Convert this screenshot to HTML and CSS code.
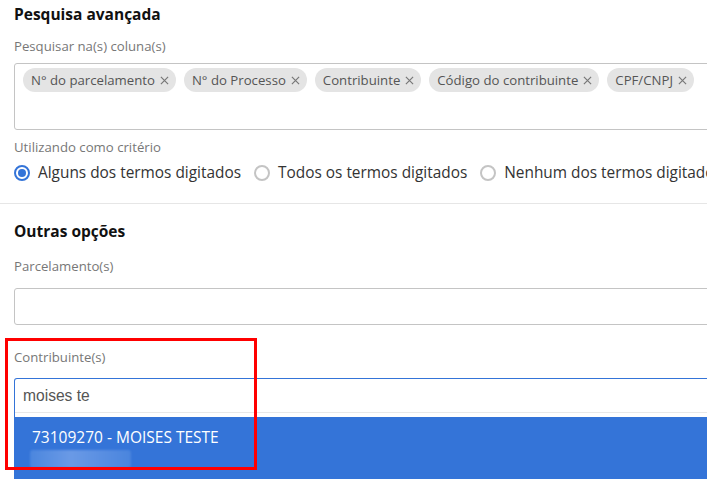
FILE: index.html
```html
<!DOCTYPE html>
<html lang="pt-BR">
<head>
  <meta charset="UTF-8" />
  <meta name="viewport" content="width=device-width, initial-scale=1.0">
  <title>Pesquisa avançada</title>
  <link rel="stylesheet" href="styles.css">
</head>
<body>
  <div class="section">
    <h2>Pesquisa avançada</h2>
    <div class="label first">Pesquisar na(s) coluna(s)</div>
    <div class="tag-box">
      <span class="tag">N° do parcelamento <svg class="x" viewBox="0 0 10 10"><path d="M1 1L9 9M9 1L1 9"/></svg></span>
      <span class="tag">N° do Processo <svg class="x" viewBox="0 0 10 10"><path d="M1 1L9 9M9 1L1 9"/></svg></span>
      <span class="tag">Contribuinte <svg class="x" viewBox="0 0 10 10"><path d="M1 1L9 9M9 1L1 9"/></svg></span>
      <span class="tag">Código do contribuinte <svg class="x" viewBox="0 0 10 10"><path d="M1 1L9 9M9 1L1 9"/></svg></span>
      <span class="tag">CPF/CNPJ <svg class="x" viewBox="0 0 10 10"><path d="M1 1L9 9M9 1L1 9"/></svg></span>
    </div>

    <div class="label criteria">Utilizando como critério</div>
    <div class="radios">
      <label class="radio"><span class="circle checked"></span>Alguns dos termos digitados</label>
      <label class="radio"><span class="circle"></span>Todos os termos digitados</label>
      <label class="radio"><span class="circle"></span>Nenhum dos termos digitados</label>
    </div>
  </div>

  <div class="divider"></div>

  <div class="section">
    <h2 class="other">Outras opções</h2>
    <div class="label">Parcelamento(s)</div>
    <div class="input"></div>

    <div class="label contrib">Contribuinte(s)</div>
    <div class="combo">
      <div class="combo-input">moises te</div>
      <div class="combo-list">
        <div class="option">
          73109270 - MOISES TESTE
          <div class="blur"></div>
        </div>
      </div>
    </div>
  </div>

  <div class="highlight"></div>
</body>
</html>
```

FILE: styles.css
```css
body {
  margin: 0;
  font-family: "Open Sans", sans-serif;
  color: #222;
  background: #fff;
  width: 707px;
  height: 479px;
  overflow: hidden;
  position: relative;
}
.section {
  padding-left: 14px;
  white-space: nowrap;
}
h2 {
  font-size: 15.5px;
  font-weight: bold;
  line-height: 20px;
  margin: 4px 0 0 0;
  color: #111;
}
.label {
  font-size: 13.2px;
  color: #777;
  line-height: 18px;
  margin-top: 16px;
}
.label.first {
  margin-top: 13px;
}
.tag-box {
  margin-top: 8px;
  width: 720px;
  height: 67px;
  border: 1px solid #c4c4c4;
  border-radius: 3px;
  padding: 4px 8px;
  box-sizing: border-box;
  display: flex;
  gap: 8px;
  align-items: flex-start;
}
.tag {
  display: flex;
  align-items: center;
  background: #e4e4e4;
  color: #555;
  font-size: 13.2px;
  height: 24px;
  padding: 0 7px 0 8px;
  border-radius: 12px;
}
.tag .x {
  width: 9px;
  height: 9px;
  margin-left: 5px;
  stroke: #777;
  stroke-width: 1.3;
  fill: none;
}
.criteria {
  margin-top: 8px;
}
.radios {
  display: flex;
  gap: 13px;
  margin-top: 6px;
}
.radio {
  display: flex;
  align-items: center;
  font-size: 15.4px;
  color: #333;
  line-height: 22px;
}
.circle {
  width: 16px;
  height: 16px;
  box-sizing: border-box;
  border: 2px solid #c4c4c4;
  border-radius: 50%;
  margin-right: 8px;
  position: relative;
}
.circle.checked {
  border-color: #3474d8;
}
.circle.checked::after {
  content: "";
  position: absolute;
  left: 2px;
  top: 2px;
  width: 8px;
  height: 8px;
  border-radius: 50%;
  background: #3474d8;
}
.divider {
  margin-top: 19px;
  border-top: 1px solid #e6e6e6;
}
h2.other {
  margin-top: 17px;
}
.input {
  margin-top: 13px;
  width: 720px;
  height: 37px;
  box-sizing: border-box;
  border: 1px solid #c4c4c4;
  border-radius: 3px;
}
.contrib {
  margin-top: 23px;
}
.combo {
  margin-top: 12px;
  width: 720px;
  border: 1px solid #3474d8;
  border-bottom: none;
  border-radius: 3px 3px 0 0;
}
.combo-input {
  height: 33px;
  line-height: 33px;
  padding-left: 8px;
  font-family: "Liberation Sans", Arial, sans-serif;
  font-size: 15.6px;
  color: #555;
  border-bottom: 1px solid #e8e8e8;
}
.combo-list {
  margin-top: 4px;
}
.option {
  background: #3474d8;
  color: #fff;
  font-size: 15.5px;
  line-height: 22px;
  padding: 9px 17px 20px;
  position: relative;
}
.blur {
  width: 101px;
  height: 18px;
  margin-top: 2px;
  margin-left: -2px;
  background: linear-gradient(90deg, #4b86de, #6a9ae6 40%, #5a8fe2 70%, #4a85dd);
  border-radius: 3px;
  filter: blur(1px);
}
.highlight {
  position: absolute;
  left: 5px;
  top: 338px;
  width: 252px;
  height: 132px;
  box-sizing: border-box;
  border: 3px solid #f00;
}
```
